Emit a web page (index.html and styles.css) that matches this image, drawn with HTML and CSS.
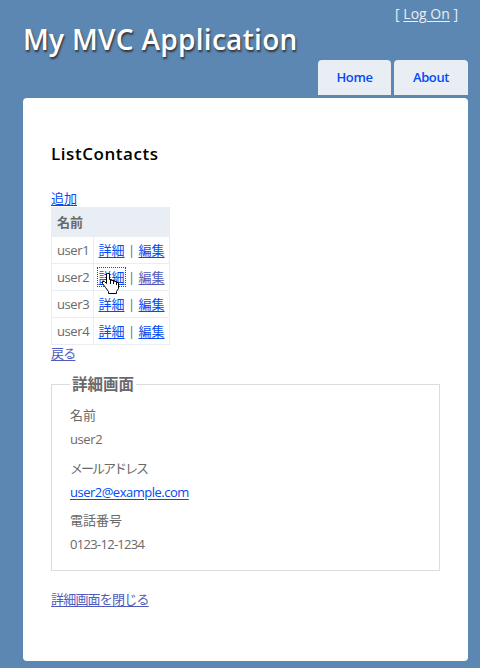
FILE: index.html
```html
<!DOCTYPE html>
<html lang="ja">
<head>
    <meta charset="UTF-8" />
    <title>ListContacts</title>
    <link rel="stylesheet" href="styles.css">
</head>
<body>
    <div class="page">
        <div id="header">
            <h1 class="title">My MVC Application</h1>
            <div class="header-right">
                <div class="logindisplay">[ <a href="#">Log On</a> ]</div>
                <ul class="menu">
                    <li><a href="#">Home</a></li>
                    <li><a href="#">About</a></li>
                </ul>
            </div>
        </div>

        <div id="main">
            <h2>ListContacts</h2>

            <div class="line"><a href="#">追加</a></div>
            <table>
                <tr>
                    <th colspan="2">名前</th>
                </tr>
                <tr>
                    <td>user1</td>
                    <td><a href="#">詳細</a><span class="sep">|</span><a href="#">編集</a></td>
                </tr>
                <tr>
                    <td>user2</td>
                    <td><a href="#" class="focused">詳細<svg class="pointer" width="18" height="23" viewBox="0 0 18 23">
                        <path d="M5.5 1.5h2v6h2v1h3v1h2v1h2v6l-2 3v2h-8v-2l-3-4-3-4v-2h2l2 2v-10z" fill="#fff" stroke="#000" stroke-linejoin="round" />
                        <path d="M8.5 8v4M11.5 9v3M14.5 10v3" fill="none" stroke="#000" />
                    </svg></a><span class="sep">|</span><a href="#" class="visited">編集</a></td>
                </tr>
                <tr>
                    <td>user3</td>
                    <td><a href="#">詳細</a><span class="sep">|</span><a href="#">編集</a></td>
                </tr>
                <tr>
                    <td>user4</td>
                    <td><a href="#">詳細</a><span class="sep">|</span><a href="#">編集</a></td>
                </tr>
            </table>
            <div class="line"><a href="#" class="visited kana">戻る</a></div>

            <fieldset>
                <legend>詳細画面</legend>
                <dl>
                    <dt>名前</dt>
                    <dd>user2</dd>
                    <dt class="katakana">メールアドレス</dt>
                    <dd><a href="#" class="mail">user2@example.com</a></dd>
                    <dt>電話番号</dt>
                    <dd class="tel">0123-12-1234</dd>
                </dl>
            </fieldset>

            <div class="line"><a href="#" class="visited kana">詳細画面を閉じる</a></div>
        </div>
    </div>
</body>
</html>
```
FILE: styles.css
```css
* {
    box-sizing: border-box;
}

body {
    background: #5c87b2;
    font-family: "Trebuchet MS", "Open Sans", "Noto Sans CJK JP", sans-serif;
    font-size: 13px;
    line-height: 18px;
    margin: 0;
    color: #696969;
}

a {
    color: #034af3;
    text-underline-offset: 2px;
}

a.visited {
    color: #505abc;
}

.page {
    width: 445px;
    margin-left: 23px;
}

/* Header */
#header {
    display: flex;
    justify-content: space-between;
    height: 98px;
    color: #fff;
}

.title {
    margin: 19px 0 0;
    font-size: 28px;
    font-weight: 600;
    line-height: 40px;
    white-space: nowrap;
    letter-spacing: 0.3px;
    text-shadow: 1px 2px 2px #333;
}

.header-right {
    display: flex;
    flex-direction: column;
    align-items: flex-end;
    margin-left: -40px;
}

.logindisplay {
    padding: 5px 10px 0 0;
    font-size: 14px;
    color: #e8eef4;
}

.logindisplay a {
    color: #e8eef4;
}

.menu {
    display: flex;
    gap: 3px;
    margin: 37px 0 0;
    padding: 0;
    list-style: none;
}

.menu a {
    display: block;
    width: 73px;
    height: 35px;
    line-height: 35px;
    background: #e8eef4;
    border-radius: 4px 4px 0 0;
    font-weight: 600;
    letter-spacing: -0.4px;
    text-align: center;
    text-decoration: none;
}

.menu li:last-child a {
    width: 74px;
}

/* Content */
#main {
    height: 563px;
    padding: 45px 28px 0;
    background: #fff;
    border-radius: 4px;
}

h2 {
    margin: 0 0 36px;
    font-size: 17px;
    font-weight: 600;
    line-height: 22px;
    letter-spacing: 0.55px;
    color: #000;
}

.line {
    height: 18px;
}

h2 + .line {
    margin-top: -12px;
}

table {
    width: 119px;
    border-collapse: collapse;
}

th,
td {
    height: 27px;
    padding: 0 5px;
    border: 1px solid #e8eef4;
    line-height: 18px;
    text-align: left;
    white-space: nowrap;
}

th {
    height: 29px;
    background: #e8eef4;
}

td:first-child {
    padding-right: 4px;
    letter-spacing: -0.4px;
}

td:last-child {
    padding: 0 4px;
}

.sep {
    display: inline-block;
    width: 14px;
    text-align: center;
}

.focused {
    position: relative;
    outline: 1px dotted #034af3;
}

.pointer {
    position: absolute;
    left: 4px;
    top: 4px;
}

table + .line {
    margin-top: -1px;
}

.kana {
    letter-spacing: -0.8px;
}

/* Contact detail */
fieldset {
    height: 197px;
    margin: 12px 0 0;
    padding: 0 18px;
    border: 1px solid #dcdcdc;
}

legend {
    padding: 0 2px;
    font-size: 15.5px;
    line-height: 20px;
    font-weight: bold;
}

dl {
    margin: 12px 0 0;
}

dt {
    height: 24px;
}

dd {
    height: 29px;
    margin: 0;
    letter-spacing: -0.4px;
}

dt + dd:nth-of-type(2) {
    height: 28px;
}

.katakana {
    letter-spacing: -2px;
}

.mail {
    letter-spacing: -0.5px;
}

.tel {
    letter-spacing: -0.7px;
}

fieldset + .line {
    margin-top: 19px;
}
```
